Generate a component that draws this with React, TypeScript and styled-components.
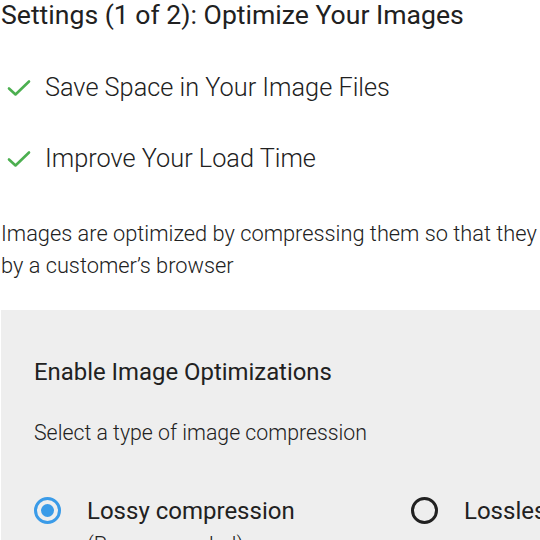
import React from "react";
import styled, { createGlobalStyle } from "styled-components";

const Global = createGlobalStyle`
  html, body { margin: 0; padding: 0; background: #ffffff; overflow: hidden; }
  body { font-family: Roboto, "Noto Sans", sans-serif; color: #212121; }
`;

const Page = styled.div`
  width: 780px;
  padding: 0 0 0 1px;
`;

const Title = styled.h1`
  margin: 0;
  font-size: 26.6px;
  font-weight: 400;
  line-height: 30px;
  color: #212121;
`;

const Benefits = styled.ul`
  list-style: none;
  margin: 42px 0 0 0;
  padding: 0;
  display: flex;
  flex-direction: column;
  gap: 39px;
`;

const Benefit = styled.li`
  display: flex;
  align-items: center;
  gap: 14px;
  font-size: 25.3px;
  font-weight: 300;
  line-height: 32px;
  padding-left: 6px;
`;

const Para = styled.p`
  margin: 43px 0 0 0;
  font-size: 21.8px;
  font-weight: 300;
  line-height: 32px;
  white-space: nowrap;
`;

const Panel = styled.section`
  margin-top: 28px;
  background: #eeeeee;
  padding: 47px 0 0 33px;
  height: 300px;
`;

const PanelTitle = styled.h2`
  margin: 0;
  font-size: 23.9px;
  font-weight: 400;
  line-height: 30px;
`;

const PanelSub = styled.p`
  margin: 32px 0 0 0;
  font-size: 21.3px;
  font-weight: 300;
  line-height: 28px;
`;

const Options = styled.div`
  margin-top: 49px;
  display: grid;
  grid-template-columns: 377px 1fr;
`;

const Option = styled.label`
  display: flex;
  align-items: flex-start;
  gap: 26px;
`;

const Radio = styled.span<{ $checked?: boolean }>`
  flex: none;
  box-sizing: border-box;
  width: 27px;
  height: 27px;
  margin-top: 1px;
  border-radius: 50%;
  border: 3px solid ${(p) => (p.$checked ? "#3a9be8" : "#212121")};
  display: flex;
  align-items: center;
  justify-content: center;
  &::after {
    content: "";
    display: ${(p) => (p.$checked ? "block" : "none")};
    width: 13px;
    height: 13px;
    border-radius: 50%;
    background: #3a9be8;
  }
`;

const OptionText = styled.div`
  display: flex;
  flex-direction: column;
`;

const OptionLabel = styled.span`
  font-size: 24px;
  font-weight: 400;
  line-height: 30px;
`;

const OptionNote = styled.span`
  margin-top: 6px;
  font-size: 21.3px;
  font-weight: 300;
  line-height: 26px;
`;

const Check = () => (
  <svg width="24" height="24" viewBox="0 0 24 24" fill="none">
    <path d="M2 12.5l6.5 6L22 5.5" stroke="#4caf50" strokeWidth="2.6" strokeLinecap="round" strokeLinejoin="round" />
  </svg>
);

export default function App() {
  return (
    <>
      <Global />
      <Page>
        <Title>Settings (1 of 2): Optimize Your Images</Title>
        <Benefits>
          <Benefit>
            <Check />
            Save Space in Your Image Files
          </Benefit>
          <Benefit>
            <Check />
            Improve Your Load Time
          </Benefit>
        </Benefits>
        <Para>
          Images are optimized by compressing them so that they load faster
          <br />
          by a customer’s browser
        </Para>
        <Panel>
          <PanelTitle>Enable Image Optimizations</PanelTitle>
          <PanelSub>Select a type of image compression</PanelSub>
          <Options>
            <Option>
              <Radio $checked />
              <OptionText>
                <OptionLabel>Lossy compression</OptionLabel>
                <OptionNote>(Recommended)</OptionNote>
              </OptionText>
            </Option>
            <Option>
              <Radio />
              <OptionText>
                <OptionLabel>Lossless compression</OptionLabel>
              </OptionText>
            </Option>
          </Options>
        </Panel>
      </Page>
    </>
  );
}
